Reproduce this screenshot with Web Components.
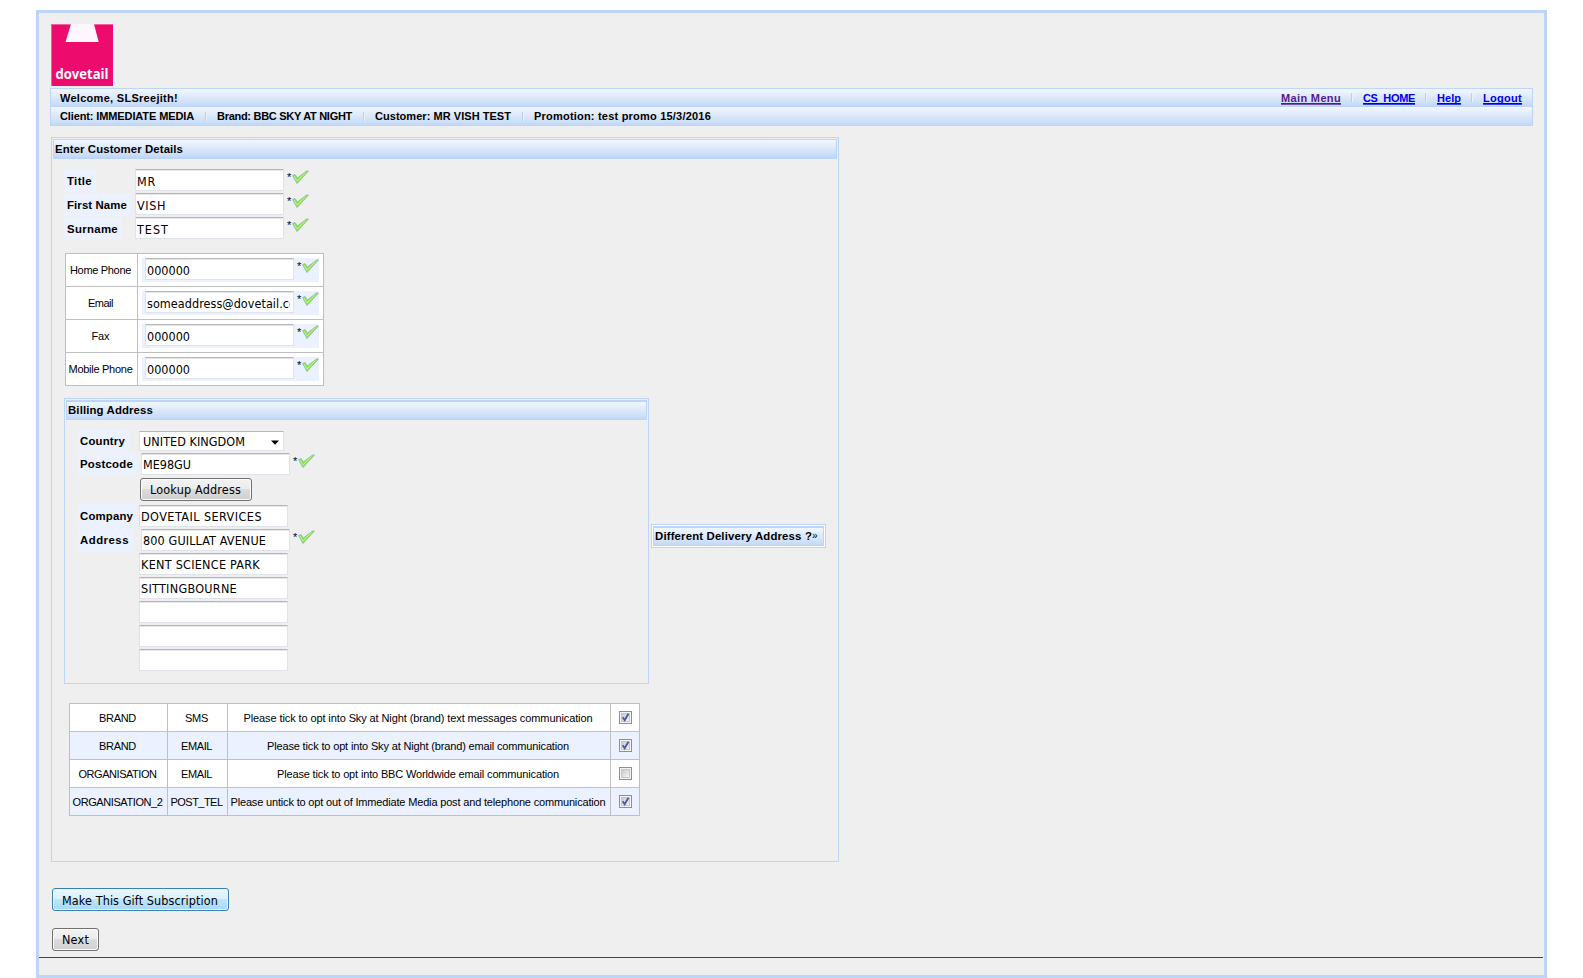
<!DOCTYPE html>
<html lang="en"><head><meta charset="utf-8"><title>Enter Customer Details</title>
<style>
body{margin:0;background:#fff;height:978px;overflow:hidden;font:11px/14px "Liberation Sans",Arial,sans-serif;color:#000;
--line:#bcd5f9;--tint:#ebf1fe;--grad:linear-gradient(#f1f7fe,#dce8fa 50%,#c3d9f9)}
</style></head><body>
<app-frame></app-frame>
<script>
function define(name, html, setup){
  const t=document.createElement('template'); t.innerHTML=html;
  customElements.define(name, class extends HTMLElement{
    constructor(){super();this.attachShadow({mode:'open'}).append(t.content.cloneNode(true));}
    connectedCallback(){ if(setup) setup.call(this,this.shadowRoot); }
  });
}
/* one line of text, tracked so that it fills the width w */
define('fit-text', `<style>:host{display:inline-block;white-space:nowrap;text-align:left}</style><span><slot></slot></span>`, function(r){
  const w=+this.getAttribute('w'), s=r.querySelector('span');
  this.style.width=w+'px';
  const n=this.textContent.length, nat=s.getBoundingClientRect().width;
  if(nat) s.style.letterSpacing=((w-nat)/n)+'px';
});
define('brand-logo', `<style>:host{display:block;width:62px;height:62px}svg{display:block}
text{font:bold 13.5px "Open Sans","Noto Sans",sans-serif;fill:#fff}</style>
<svg width="62" height="62" viewBox="0 0 62 62"><rect width="62" height="62" fill="#ed0c6e"/><path d="M.5 62V.5H62" fill="none" stroke="#f583b4" stroke-opacity=".7"/><path d="M20 0H43L47.7 18H14.5Z" fill="#fff6fd"/><text x="4.5" y="54.5" textLength="53" lengthAdjust="spacingAndGlyphs">dovetail</text></svg>`);
define('bar-sep', `<style>:host{display:block;width:1px;height:9px;margin:0 10px;background:#b5d0f7;border-right:1px solid #e9f2fe}</style>`);
define('nav-link', `<style>:host{display:block;margin-top:1px;--u:#00e}a{color:var(--u);display:block;height:14px;background:linear-gradient(var(--u),var(--u)) 0 12px/100% 1px no-repeat,linear-gradient(var(--u),var(--u)) 0 13px/100% .5px no-repeat;position:relative}
a::after{content:"";position:absolute;left:0;right:0;top:13px;height:1px;background:var(--u);opacity:.4}
:host([visited]){--u:#551a8b}</style><a><slot></slot></a>`);
define('nav-bar', `<style>:host{display:block;width:1481px;border:1px solid var(--line);font-weight:bold}
.r{display:flex;align-items:center;height:17px;background:var(--grad);padding:0 10px 0 9px}
.r+.r{border-top:1px solid var(--line);height:18px;padding-left:9px}.r+.r bar-sep{margin:0 10px 0 11px}
.g{flex:1}
</style>
<div class="r"><fit-text w="118">Welcome, SLSreejith!</fit-text><span class="g"></span>
<nav-link visited><fit-text w="60">Main Menu</fit-text></nav-link><bar-sep></bar-sep><nav-link><fit-text w="52">CS_HOME</fit-text></nav-link><bar-sep></bar-sep><nav-link><fit-text w="24">Help</fit-text></nav-link><bar-sep></bar-sep><nav-link><fit-text w="39">Logout</fit-text></nav-link></div>
<div class="r"><fit-text w="134">Client: IMMEDIATE MEDIA</fit-text><bar-sep></bar-sep><fit-text w="135">Brand: BBC SKY AT NIGHT</fit-text><bar-sep></bar-sep><fit-text w="136">Customer: MR VISH TEST</fit-text><bar-sep></bar-sep><fit-text w="177">Promotion: test promo 15/3/2016</fit-text></div>`);
define('ui-panel', `<style>:host{display:block;box-sizing:border-box;border:1px solid var(--line);padding:1px}
.h{box-sizing:border-box;height:20px;border:1px solid var(--line);border-bottom-width:2px;background:var(--grad);font-weight:bold;font-size:11.4px;padding:2px 0 0 1px}
:host([kind=inner]) .h{border-width:2px 1px 1px;padding-top:1px}</style>
<div class="h"><slot name="title"></slot></div><slot></slot>`);
define('valid-mark', `<style>:host{display:flex;height:22px}span{font-size:11px;line-height:14px;width:5px;padding-top:1px}svg{display:block;margin-top:1px}</style>
<span>*</span><svg width="17" height="15" viewBox="0 0 17 15"><path d="M.6 5.6 3.1 4.6 5.4 8 14.6.9 16.4 1.1 5 13.6Z" fill="#8ce45c" stroke="#8fae98" stroke-width=".7"/><path d="M2 6 5 11 13.5 2.5" fill="none" stroke="#baf58f" stroke-width="1"/></svg>`);
define('text-field', `<style>:host{display:block;box-sizing:border-box;width:149px;height:22px;border:1px solid #dfe2e8;border-top:1px solid #b4b6ba;box-shadow:inset 0 1px #e4e5e8;border-radius:1px;background:#fff;
overflow:hidden;font:12.5px/16px "DejaVu Sans Condensed","DejaVu Sans",sans-serif;padding:var(--ft,4px) 3px 0 1px}div{overflow:hidden;height:17px}</style><div><slot></slot></div>`);
define('field-label', `<style>:host{display:block;box-sizing:border-box;height:22px;background:var(--tint);padding:4px 0 0 3px;font-weight:bold;font-size:11.4px}</style><slot></slot>`);
define('form-row', `<style>:host{display:flex;height:24px}.l{display:flex;width:var(--lw,71px);align-items:flex-start;padding-top:var(--lt,1px)}::slotted(valid-mark){margin-left:3px}</style><div class="l"><slot name="label"></slot></div><slot></slot>`);
define('select-field', `<style>:host{display:flex;box-sizing:border-box;width:145px;height:20px;border:1px solid #dfe2e8;border-top-color:#b4b6ba;background:#fff;font:12.5px/16px "DejaVu Sans Condensed","DejaVu Sans",sans-serif;padding:2px 4px 0 3px;justify-content:space-between}svg{margin-top:6px}</style><slot></slot><svg width="8" height="5"><path d="M0 .5H8L4 4.8Z"/></svg>`);
define('ui-button', `<style>:host{display:block;box-sizing:border-box;height:23px;border:1px solid #707070;border-radius:3px;background:linear-gradient(#f3f3f3,#ebebeb 48%,#dcdcdc 50%,#cfcfcf);box-shadow:inset 0 0 0 1px #fbfbfb;font:12.5px/16px "DejaVu Sans Condensed","DejaVu Sans",sans-serif;padding:3px 0 0 9px}
:host([primary]){border-color:#3c7fb1;padding-top:4px;background:linear-gradient(#eaf6fd,#d9f0fc 48%,#bee6fd 50%,#a7d9f5);box-shadow:inset 0 0 0 1px #e5f6fd}</style><slot></slot>`);
define('contact-table', `<style>:host{display:grid;grid-template-columns:71px 185px;grid-auto-rows:32px;gap:1px;background:#bfbfbf;border:1px solid #bfbfbf;width:257px}
.c{background:#fff;display:flex;justify-content:center;align-items:center}.c>fit-text{margin-right:2px}.v{background:var(--tint);display:flex;height:24px;width:174px;padding-left:3px}.v valid-mark{margin-left:3px}.f{align-items:flex-start;padding-top:4px;height:28px}</style>`, function(r){
  for(const [l,w,v,vw] of [['Home Phone',61,'000000',43],['Email',25,'someaddress@dovetail.co',149],['Fax',18,'000000',43],['Mobile Phone',64,'000000',43]])
    r.innerHTML+=`<div class="c"><fit-text w="${w}">${l}</fit-text></div><div class="c f"><div class="v"><text-field><fit-text w="${vw}">${v}</fit-text></text-field><valid-mark></valid-mark></div></div>`;
});
define('check-box', `<style>:host{display:block;width:13px;height:13px}svg{display:block}:host([off]) .k{display:none}</style>
<svg width="13" height="13"><defs><linearGradient id="g" x2="1" y2="1"><stop stop-color="#c3c8cf"/><stop offset="1" stop-color="#f8f8f8"/></linearGradient></defs><rect x=".5" y=".5" width="12" height="12" fill="#f4f4f4" stroke="#8e8f8f"/><rect x="2.5" y="2.5" width="8" height="8" fill="url(#g)" stroke="#c4c7cc"/><path class="k" d="M3.7 6.3 5.7 9.2 9.4 2.8" fill="none" stroke="#4a5f97" stroke-width="1.9"/></svg>`);
define('consent-table', `<style>:host{display:grid;grid-template-columns:97px 59px 382px 28px;grid-auto-rows:27px;gap:1px;background:#bfbfbf;border:1px solid #bfbfbf;width:569px}
div{display:flex;justify-content:center;align-items:center;background:#fff}.t{background:var(--tint)}fit-text{margin-right:2px}</style>`, function(r){
  [['BRAND',37,'SMS',23,'Please tick to opt into Sky at Night (brand) text messages communication',349,1],
   ['BRAND',37,'EMAIL',31,'Please tick to opt into Sky at Night (brand) email communication',302,1],
   ['ORGANISATION',78,'EMAIL',31,'Please tick to opt into BBC Worldwide email communication',282,0],
   ['ORGANISATION_2',90,'POST_TEL',52,'Please untick to opt out of Immediate Media post and telephone communication',375,1]
  ].forEach((a,i)=>{const c=i%2?'class="t"':'';
    for(let k=0;k<6;k+=2) r.innerHTML+=`<div ${c}><fit-text w="${a[k+1]}">${a[k]}</fit-text></div>`;
    r.innerHTML+=`<div ${c}><check-box ${a[6]?'':'off'}></check-box></div>`;});
});
define('billing-form', `<style>:host{display:block;padding:10px 0 0 11px;--lw:62px;--lt:0px;--ft:3px}
.n text-field{margin-top:1px}.i{--lw:64px}
.a text-field,.a valid-mark{margin-top:1px}ui-button{width:112px;margin:1px 0 4px 63px}</style>
<form-row style="height:23px"><field-label slot="label" style="width:52px"><fit-text w="45">Country</fit-text></field-label><select-field style="margin-top:1px"><fit-text w="102">UNITED KINGDOM</fit-text></select-field></form-row>
<form-row class="i"><field-label slot="label" style="width:60px"><fit-text w="53">Postcode</fit-text></field-label><text-field><fit-text w="48">ME98GU</fit-text></text-field><valid-mark></valid-mark></form-row>
<ui-button><fit-text w="91">Lookup Address</fit-text></ui-button>
<form-row class="n" style="margin-top:-1px"><field-label slot="label" style="width:60px;height:23px;padding-top:5px"><fit-text w="53">Company</fit-text></field-label><text-field><fit-text w="121">DOVETAIL SERVICES</fit-text></text-field></form-row>
<form-row class="i a"><field-label slot="label" style="width:56px;height:23px;padding-top:5px"><fit-text w="49">Address</fit-text></field-label><text-field><fit-text w="123">800 GUILLAT AVENUE</fit-text></text-field><valid-mark></valid-mark></form-row>
<form-row class="n"><text-field><fit-text w="119">KENT SCIENCE PARK</fit-text></text-field></form-row>
<form-row class="n"><text-field><fit-text w="96">SITTINGBOURNE</fit-text></text-field></form-row>
<form-row class="n"><text-field></text-field></form-row><form-row class="n"><text-field></text-field></form-row><form-row class="n"><text-field></text-field></form-row>`);
define('delivery-toggle', `<style>:host{display:block;box-sizing:border-box;width:175px;height:24px;border:1px solid var(--line);background:#fff;padding:1px;font-weight:bold;font-size:11.4px}
div{box-sizing:border-box;height:20px;border:1px solid var(--line);border-top-width:2px;background:var(--grad);padding:1px 0 0 1px;display:flex}span{font-weight:normal;font-size:10px}</style><div><fit-text w="157">Different Delivery Address ?</fit-text><span>»</span></div>`);
define('app-frame', `<style>:host{display:block;box-sizing:border-box;width:1511px;height:968px;margin:10px 0 0 36px;border:3px solid var(--line);background:#efefef}
brand-logo{margin:11px 0 2px 12px}nav-bar{margin-left:11px}
.main{width:788px;height:725px;margin:11px 0 0 12px}
.names{padding:10px 0 0 11px}contact-table{margin:12px 0 12px 12px}
.mid{display:flex;align-items:center;padding-left:11px;gap:2px}.bill{width:585px;height:286px}delivery-toggle{margin-top:-10px}
consent-table{margin:19px 0 0 16px}
.b1{width:177px;margin:26px 0 0 13px}.b2{width:47px;margin:17px 0 6px 13px}
hr{margin:0;border:0;height:1px;width:1504px;background:#444}</style>
<brand-logo></brand-logo><nav-bar></nav-bar>
<ui-panel class="main"><fit-text slot="title" w="128">Enter Customer Details</fit-text>
<div class="names">
<form-row><field-label slot="label" style="width:32px"><fit-text w="25">Title</fit-text></field-label><text-field><fit-text w="19">MR</fit-text></text-field><valid-mark></valid-mark></form-row>
<form-row><field-label slot="label" style="width:67px"><fit-text w="60">First Name</fit-text></field-label><text-field><fit-text w="29">VISH</fit-text></text-field><valid-mark></valid-mark></form-row>
<form-row><field-label slot="label" style="width:58px"><fit-text w="51">Surname</fit-text></field-label><text-field><fit-text w="32">TEST</fit-text></text-field><valid-mark></valid-mark></form-row></div>
<contact-table></contact-table>
<div class="mid"><ui-panel kind="inner" class="bill"><fit-text slot="title" w="85">Billing Address</fit-text><billing-form></billing-form></ui-panel><delivery-toggle></delivery-toggle></div>
<consent-table></consent-table></ui-panel>
<ui-button primary class="b1"><fit-text w="156">Make This Gift Subscription</fit-text></ui-button>
<ui-button class="b2"><fit-text w="27">Next</fit-text></ui-button><hr>`);
</script></body></html>
